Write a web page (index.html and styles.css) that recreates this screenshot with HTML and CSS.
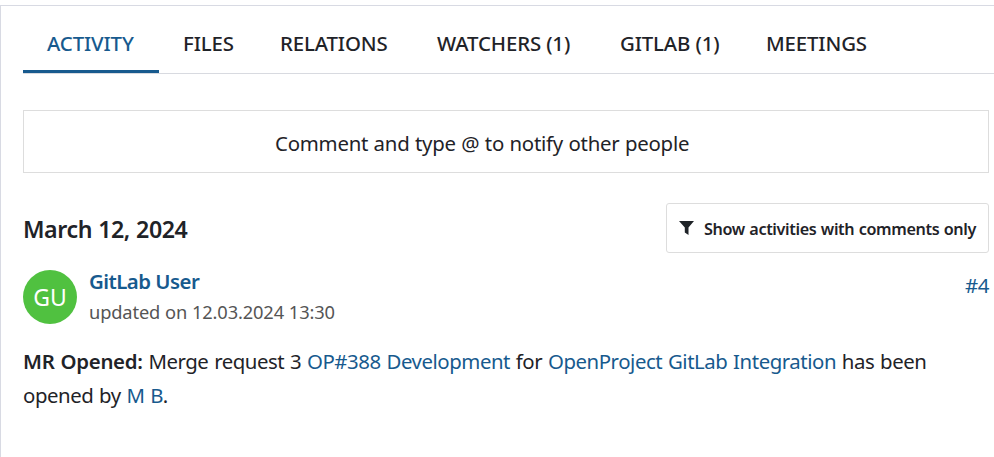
FILE: index.html
```html
<!DOCTYPE html>
<html lang="en">
<head>
<meta charset="utf-8">
<title>Activity</title>
<link rel="stylesheet" href="styles.css">
</head>
<body>
<main class="panel">
  <nav class="tabs">
    <a class="tab active">ACTIVITY</a>
    <a class="tab">FILES</a>
    <a class="tab">RELATIONS</a>
    <a class="tab">WATCHERS (1)</a>
    <a class="tab">GITLAB (1)</a>
    <a class="tab">MEETINGS</a>
  </nav>
  <div class="comment">Comment and type @ to notify other people</div>
  <div class="day">
    <h2>March 12, 2024</h2>
    <button class="filter">
      <svg width="16" height="16" viewBox="0 0 16 16"><path d="M0 1h15L9.500 7.500V15L5.800 12.500V7.500Z" fill="#1f2328"/></svg>
      <span>Show activities with comments only</span>
    </button>
  </div>
  <div class="entry">
    <div class="avatar">GU</div>
    <div class="who"><a class="name">GitLab User</a><span class="date">updated on 12.03.2024 13:30</span></div>
    <a class="num">#4</a>
  </div>
  <p class="message"><b>MR Opened:</b> Merge request 3 <a>OP#388 Development</a> for <a>OpenProject GitLab Integration</a> has been<br>opened by <a>M B</a>.</p>
</main>
</body>
</html>
```

FILE: styles.css
```css
* { box-sizing: border-box; }
body { margin: 0; background: #fff; color: #1f2328; font: 20.4px/34px "Noto Sans", "Open Sans", sans-serif; }
a { color: #175a8e; }
.panel { height: 452px; margin-top: 5px; border-top: 1px solid #d8dae3; border-left: 1px solid #d8dae3; padding-left: 22px; overflow: hidden; }
.tabs { display: grid; grid-template-columns: 136px 97px 157px 183px 146px 1fr; height: 68px; border-bottom: 1px solid #d8dae0; }
.tab { padding: 20px 0 0 24px; color: #1f2328; font-weight: 550; letter-spacing: -.13px; white-space: nowrap; }
.active { color: #175a8e; border-bottom: 3px solid #175a8e; }
.comment { height: 63px; margin: 36px 5px 0 0; border: 1px solid #ddd; padding: 15px 0 0 251px; letter-spacing: -.24px; word-spacing: .4px; }
.day { display: flex; justify-content: space-between; margin: 30px 5px 0 0; height: 50px; }
h2 { margin: 9px 0 0; font-size: 23.2px; font-weight: 600; letter-spacing: -.43px; word-spacing: .6px; }
.filter { width: 323px; border: 1px solid #ddd; border-radius: 3px; background: #fff; color: #1f2328; display: flex; align-items: center; gap: 9px; padding: 0 0 0 12px; font: 600 16.2px "Noto Sans", sans-serif; letter-spacing: -.37px; word-spacing: .6px; white-space: nowrap; }
.filter span { margin-top: 1px; }
.entry { display: flex; margin: 17px 5px 0 0; height: 54px; }
.avatar { width: 54px; height: 54px; border-radius: 50%; background: #50c140; color: #fff; text-align: center; line-height: 55px; font-size: 23px; }
.who { margin-left: 12px; display: flex; flex-direction: column; }
.name { font-weight: 600; line-height: 22px; letter-spacing: -.53px; }
.date { color: #555; font-size: 18.3px; line-height: 39px; letter-spacing: -.15px; word-spacing: .3px; }
.num { margin-left: auto; line-height: 31px; letter-spacing: -.4px; }
.message { margin: 20px 0 0; white-space: nowrap; letter-spacing: -.45px; word-spacing: .9px; }
.message b { font-weight: 600; letter-spacing: -.27px; }
```
